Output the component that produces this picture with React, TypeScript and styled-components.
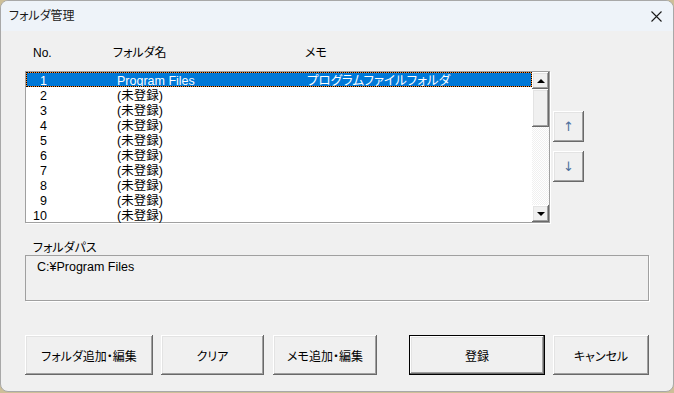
import React from 'react';
import styled, { createGlobalStyle, css } from 'styled-components';

const GlobalStyle = createGlobalStyle`
  html, body {
    margin: 0;
    padding: 0;
    background: #cdbf98;
  }
  * {
    box-sizing: border-box;
  }
`;

const FONT = `"Liberation Sans", "Noto Sans CJK JP", sans-serif`;

const rows = [
  { no: 1, name: 'Program Files', memo: 'プログラムファイルフォルダ' },
  ...Array.from({ length: 9 }, (_, i) => ({ no: i + 2, name: '(未登録)', memo: '' })),
];

const bevel = css`
  background: #f0f0f0;
  box-shadow:
    inset -1px -1px 0 #696969,
    inset 1px 1px 0 #ffffff,
    inset -2px -2px 0 #a0a0a0,
    inset 2px 2px 0 #e3e3e3;
`;

export default function App() {
  return (
    <>
      <GlobalStyle />
      <Window>
        <TitleBar>
          <Title>フォルダ管理</Title>
          <CloseButton aria-label="close">
            <svg width="11" height="11" viewBox="0 0 11 11">
              <path d="M0.5 0.5 L10.5 10.5 M10.5 0.5 L0.5 10.5" stroke="#1a1a1a" strokeWidth="1.1" fill="none" />
            </svg>
          </CloseButton>
        </TitleBar>

        <Body>
          <HeaderRow>
            <HeadCell $w={80}>No.</HeadCell>
            <HeadCell $w={192}>フォルダ名</HeadCell>
            <HeadCell>メモ</HeadCell>
          </HeaderRow>

          <ListArea>
            <ListBox>
              <Rows>
                {rows.map((r) => (
                  <Row key={r.no} $selected={r.no === 1}>
                    <NoCell>{r.no}</NoCell>
                    <Cell>{r.name}</Cell>
                    <Cell>{r.memo}</Cell>
                  </Row>
                ))}
              </Rows>
              <ScrollBar>
                <ScrollBtn>
                  <Tri $up />
                </ScrollBtn>
                <Thumb />
                <Track />
                <ScrollBtn>
                  <Tri />
                </ScrollBtn>
              </ScrollBar>
            </ListBox>

            <MoveButtons>
              <MoveButton>↑</MoveButton>
              <MoveButton>↓</MoveButton>
            </MoveButtons>
          </ListArea>

          <PathLabel>フォルダパス</PathLabel>
          <PathBox>C:¥Program Files</PathBox>

          <ButtonBar>
            <Button $w={128}>フォルダ追加・編集</Button>
            <Button $w={103} $ml={8}>クリア</Button>
            <Button $w={104} $ml={9}>メモ追加・編集</Button>
            <Button $w={136} $ml={32} $default>登録</Button>
            <Button $w={96} $ml={8}>キャンセル</Button>
          </ButtonBar>
        </Body>
      </Window>
    </>
  );
}

const Window = styled.div`
  width: 674px;
  height: 392px;
  border: 1px solid #a8a8a8;
  border-radius: 8px;
  overflow: hidden;
  display: flex;
  flex-direction: column;
  background: #f0f0f0;
  font-family: ${FONT};
  font-feature-settings: "palt";
  color: #000;
`;

const TitleBar = styled.div`
  height: 30px;
  flex: none;
  display: flex;
  align-items: center;
  justify-content: space-between;
  background: #eef3f9;
  padding: 0 11px 0 8px;
`;

const Title = styled.span`
  font-size: 12px;
  line-height: 14px;
  color: #1a1a1a;
`;

const CloseButton = styled.div`
  width: 11px;
  height: 11px;
  display: flex;
`;

const Body = styled.div`
  flex: 1;
  display: flex;
  flex-direction: column;
  padding: 15px 0 0 24px;
`;

const HeaderRow = styled.div`
  display: flex;
  height: 14px;
  line-height: 14px;
  font-size: 12px;
  padding-left: 8px;
`;

const HeadCell = styled.div<{ $w?: number }>`
  ${(p) => (p.$w ? `width: ${p.$w}px;` : 'flex: 1;')}
  white-space: nowrap;
`;

const ListArea = styled.div`
  display: flex;
  margin-top: 11px;
  gap: 3px;
`;

const ListBox = styled.div`
  width: 525px;
  height: 152px;
  display: flex;
  background: #fff;
  border: 1px solid #a0a0a0;
  box-shadow: 1px 1px 0 #fff;
`;

const Rows = styled.div`
  flex: 1;
  display: flex;
  flex-direction: column;
`;

const Row = styled.div<{ $selected?: boolean }>`
  height: 15px;
  padding-top: 4px;
  line-height: 11px;
  font-size: 12.5px;
  display: grid;
  grid-template-columns: 91px 190px 1fr;
  white-space: nowrap;
  ${(p) =>
    p.$selected &&
    css`
      background: #0078d7;
      color: #fff;
      box-shadow: inset 0 0 0 1px #ff8728;
      outline: 1px dotted #000;
      outline-offset: -1px;
    `}
`;

const NoCell = styled.div`
  text-align: right;
  padding-right: 70px;
`;

const Cell = styled.div`
  overflow: visible;
`;

const ScrollBar = styled.div`
  width: 17px;
  display: flex;
  flex-direction: column;
`;

const ScrollBtn = styled.div`
  ${bevel}
  height: 17px;
  flex: none;
  display: flex;
  align-items: center;
  justify-content: center;
`;

const Tri = styled.div<{ $up?: boolean }>`
  width: 0;
  height: 0;
  border-left: 4px solid transparent;
  border-right: 4px solid transparent;
  ${(p) => (p.$up ? 'border-bottom: 4px solid #000;' : 'border-top: 4px solid #000;')}
`;

const Thumb = styled.div`
  ${bevel}
  height: 38px;
  flex: none;
`;

const Track = styled.div`
  flex: 1;
  background-color: #ffffff;
  background-image: repeating-conic-gradient(#f0f0f0 0 25%, #ffffff 0 50%);
  background-size: 2px 2px;
`;

const MoveButtons = styled.div`
  display: flex;
  flex-direction: column;
  gap: 9px;
  padding-top: 40px;
`;

const MoveButton = styled.div`
  ${bevel}
  width: 31px;
  height: 31px;
  display: flex;
  align-items: center;
  justify-content: center;
  font-family: "DejaVu Sans", sans-serif;
  font-size: 13px;
  color: #4d6f9c;
`;

const PathLabel = styled.div`
  margin-top: 18px;
  padding-left: 8px;
  font-size: 12px;
  line-height: 14px;
`;

const PathBox = styled.div`
  width: 624px;
  height: 46px;
  border: 1px solid #a0a0a0;
  box-shadow: 1px 1px 0 #fff;
  padding: 4px 0 0 11px;
  font-size: 12.5px;
  line-height: 15px;
`;

const ButtonBar = styled.div`
  display: flex;
  margin-top: 34px;
`;

const Button = styled.div<{ $w: number; $ml?: number; $default?: boolean }>`
  ${bevel}
  width: ${(p) => p.$w}px;
  height: 40px;
  margin-left: ${(p) => p.$ml ?? 0}px;
  display: flex;
  align-items: center;
  justify-content: center;
  font-size: 12px;
  white-space: nowrap;
  ${(p) =>
    p.$default &&
    css`
      border: 1px solid #000;
    `}
`;
